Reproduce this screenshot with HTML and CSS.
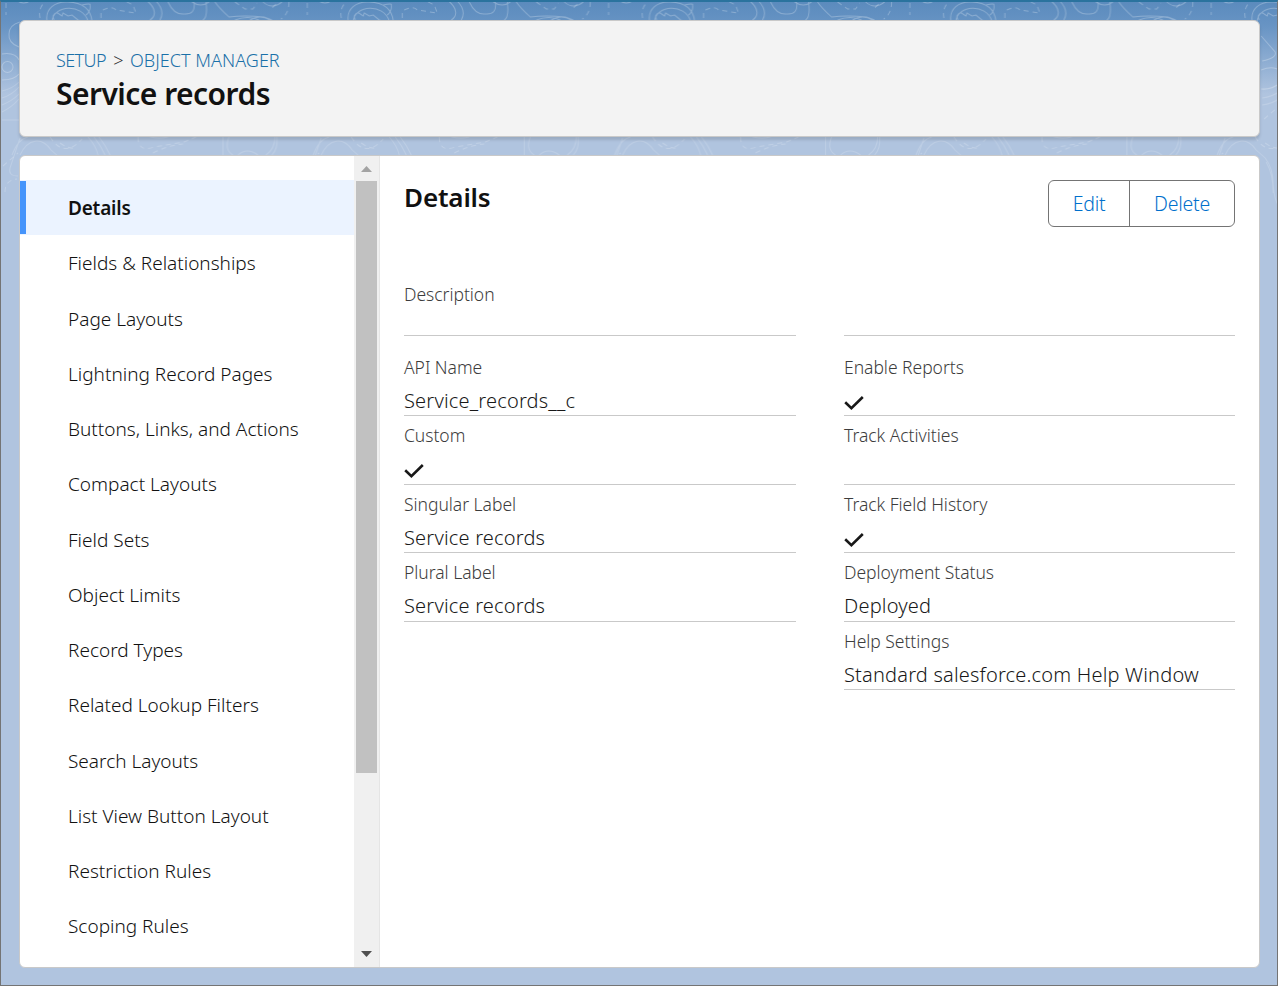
FILE: index.html
```html
<!DOCTYPE html>
<html lang="en">
<head>
<meta charset="utf-8">
<title>Service records</title>
<link rel="stylesheet" href="styles.css">
</head>
<body>
<div class="page">
  <svg class="topo" width="1278" height="300" aria-hidden="true">
    <defs>
      <pattern id="contours" width="301.3" height="300" patternUnits="userSpaceOnUse">
        <g fill="none" stroke="#fff" stroke-width="1">
          <g stroke-opacity=".26">
            <path d="M16 0Q24 6 31 0M47 21C45 9 55 1 68 2Q90 3 92 21M52 21C54 5 82 3 88 21M54 20l-1-4q3-5 6-2l3 2 1-3 5 3 4-1 6 5 3 1M82 5q9-2 8 0 1 6-4 10M146 0C158 9 155 17 150 20M155 0C163 8 163 15 160 20M168 2Q174 15 184 14 196 15 194 2M206 2q2 15-3 18M215 2Q219 8 229 17q15-2 35 0l8 3M250 20q10-6 20 0M192 2q9 6 17 0M235 20q13-5 24 0M263 2Q272 10 282 2"/>
            <path d="M20 22Q9 25 9 34 8 43 19 47M2 54Q15 52 19 60M2 67a5 5 0 1 0 11 0a5 5 0 1 0-11 0M2 80Q14 80 19 74M56 36l14 16q2 6-13 9M56 70q12-5 19 1M56 89q10 1 19-6"/>
          </g>
          <g stroke-opacity=".26" stroke-dasharray="5 4">
            <path d="M6 3v12M40 18Q38 8 45 2M101 18V11q11-6 15-1l20 3-3-8-8-4M235 2l10 7h8l4-6M289 2q0 12-8 17M276 4l-5 5"/>
          </g>
          <g stroke-opacity=".17">
            <path d="M2 91Q12 89 19 82M2 98Q12 95 19 87M2 105Q12 101 19 94M2 112Q12 107 19 99M2 120h17M57 98Q67 97 75 91M57 105Q67 104 75 98"/>
            <path d="M12 155Q18 139 28 137M20 155C28 138 42 137 51 150l9 8q8 10 8 27 1 15 6 22M88 137Q96 146 98 155M94 137Q101 146 105 155M99 137Q106 146 110 155M223 137v18M229 137q-5 13 4 18M266 155Q275 149 275 137M272 155Q278 149 277 137M238 155q9-8 20 0M150 137q10 2 18 0M20 138L10 168q-2 8 8 8M61 162q7 12 7 31"/>
          </g>
          <g stroke-opacity=".2" stroke-dasharray="5 4">
            <path d="M50 137q14 22 32 2M138 137q0 16 16 10l30-5 12-5M153 153q16-8 30-9M3 166l15-13M5 192q0-12 12-13M59 119l15-13M60 143q8 6 15 5"/>
          </g>
        </g>
      </pattern>
    </defs>
    <rect width="1278" height="235" fill="url(#contours)"/>
  </svg>
  <header class="header">
    <div class="crumbs"><a class="crumb-first">SETUP</a><span class="sep">&gt;</span><a class="crumb-last">OBJECT MANAGER</a></div>
    <h1 class="title">Service records</h1>
  </header>
  <main class="panel">
    <nav class="nav">
      <a class="item active">Details</a>
      <a class="item">Fields &amp; Relationships</a>
      <a class="item">Page Layouts</a>
      <a class="item">Lightning Record Pages</a>
      <a class="item">Buttons, Links, and Actions</a>
      <a class="item">Compact Layouts</a>
      <a class="item">Field Sets</a>
      <a class="item">Object Limits</a>
      <a class="item">Record Types</a>
      <a class="item">Related Lookup Filters</a>
      <a class="item">Search Layouts</a>
      <a class="item">List View Button Layout</a>
      <a class="item">Restriction Rules</a>
      <a class="item">Scoping Rules</a>
    </nav>
    <div class="scrollbar">
      <svg class="arrow" width="11" height="6" viewBox="0 0 11 6"><path d="M5.5 0L11 6H0Z" fill="#a3a3a3"/></svg>
      <div class="thumb"></div>
      <svg class="arrow" width="11" height="6" viewBox="0 0 11 6"><path d="M0 0H11L5.5 6Z" fill="#505050"/></svg>
    </div>
    <section class="content">
      <div class="content-head">
        <h2 class="subtitle">Details</h2>
        <div class="buttons"><button class="btn edit">Edit</button><button class="btn delete">Delete</button></div>
      </div>
      <div class="fields">
        <div class="column">
          <div class="field first"><span class="label">Description</span></div>
          <div class="field second"><span class="label">API Name</span><span class="value">Service_records__c</span></div>
          <div class="field"><span class="label">Custom</span><svg class="check" width="20" height="14" viewBox="0 0 20 14"><path d="M1.2 6.2L7.4 12.1L18.8 1"/></svg></div>
          <div class="field"><span class="label">Singular Label</span><span class="value">Service records</span></div>
          <div class="field"><span class="label">Plural Label</span><span class="value">Service records</span></div>
        </div>
        <div class="column">
          <div class="field first"></div>
          <div class="field second"><span class="label">Enable Reports</span><svg class="check" width="20" height="14" viewBox="0 0 20 14"><path d="M1.2 6.2L7.4 12.1L18.8 1"/></svg></div>
          <div class="field"><span class="label">Track Activities</span></div>
          <div class="field"><span class="label">Track Field History</span><svg class="check" width="20" height="14" viewBox="0 0 20 14"><path d="M1.2 6.2L7.4 12.1L18.8 1"/></svg></div>
          <div class="field"><span class="label">Deployment Status</span><span class="value">Deployed</span></div>
          <div class="field"><span class="label">Help Settings</span><span class="value">Standard salesforce.com Help Window</span></div>
        </div>
      </div>
    </section>
  </main>
</div>
</body>
</html>
```
FILE: styles.css
```css
* { box-sizing: border-box; }
body { margin: 0; font-family: "Noto Sans", "Open Sans", sans-serif; font-weight: 350; color: #111; }
.page {
  position: relative;
  width: 1278px;
  height: 986px;
  padding: 18px 17px 17px 18px;
  border: 1px solid #747474;
  border-top: 2px solid #2a739e;
  background: linear-gradient(#5b8bbd 0, #6894c4 24px, #b0c4df 92px);
  overflow: hidden;
}
.topo { position: absolute; left: -1px; top: -2px; }
.header {
  position: relative;
  height: 117px;
  padding: 27px 36px;
  border: 1px solid #c9c9c9;
  border-radius: 6px;
  background: #f3f3f3;
  box-shadow: 0 3px 3px rgba(0, 0, 0, .13);
}
.crumbs { display: flex; height: 24px; align-items: center; font-size: 18px; line-height: 24px; color: #333; }
.crumbs a { color: #1a70a8; }
.crumb-first { width: 51px; letter-spacing: -.6px; }
.crumb-last { letter-spacing: .03px; }
.sep { width: 23px; text-align: center; }
.title { margin: 2px 0 0; font-size: 30px; line-height: 39px; font-weight: 650; letter-spacing: -.53px; }
.panel {
  position: relative;
  display: flex;
  height: 813px;
  margin-top: 18px;
  border: 1px solid #c9c9c9;
  border-radius: 6px;
  background: #fff;
  overflow: hidden;
}
.nav { width: 334px; flex: none; padding-top: 24px; }
.item { display: block; height: 55.25px; padding-left: 48px; font-size: 19px; line-height: 56px; letter-spacing: 0; white-space: nowrap; }
.active { background: #ebf3ff linear-gradient(#4594fb, #4594fb) 0 1px / 6px 53px no-repeat; font-weight: 650; line-height: 57px; letter-spacing: -.2px; }
.scrollbar { display: flex; flex: none; flex-direction: column; align-items: center; width: 26px; padding: 10px 1px 10px 0; border-right: 1px solid #e5e5e5; background: #f0f0f0; }
.thumb { width: 21px; height: 592px; margin: 9px 0 auto; background: #c1c1c1; }
.content { flex: 1; padding: 24px 24px 0; }
.content-head { display: flex; justify-content: space-between; height: 103px; }
.subtitle { margin: 0; font-size: 26px; line-height: 34px; font-weight: 650; letter-spacing: -.15px; }
.buttons { display: flex; width: 187px; height: 47px; border: 1px solid #747474; border-radius: 6px; }
.btn { padding: 0; border: 0; background: none; color: #0070cc; font: 350 19.5px "Noto Sans", sans-serif; letter-spacing: -.25px; }
.edit { width: 81px; border-right: 1px solid #747474; }
.delete { flex: 1; }
.fields { display: grid; grid-template-columns: 392px 391px; gap: 48px; }
.field { display: flex; flex-direction: column; height: 68.5px; padding-top: 7px; border-bottom: 1px solid #c9c9c9; }
.first { height: 53px; padding-top: 0; }
.first .label { margin-top: -1px; }
.second { height: 80px; padding-top: 19px; }
.label { font-size: 17.5px; line-height: 24px; color: #3c3c3c; letter-spacing: -.03px; }
.value { margin-top: 7px; font-size: 20px; line-height: 30px; color: #181818; letter-spacing: .19px; white-space: nowrap; }
.check { margin-top: 17px; fill: none; stroke: #181818; stroke-width: 2.6; }
```
